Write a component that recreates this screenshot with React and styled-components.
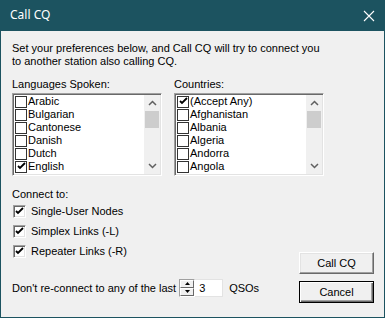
import React from "react";
import styled, { createGlobalStyle } from "styled-components";

const Global = createGlobalStyle`
  html, body { margin: 0; padding: 0; background: #f0f0f0; overflow: hidden; }
  * { box-sizing: border-box; }
`;

const Window = styled.div`
  width: 385px;
  height: 318px;
  background: #1c5360;
  padding: 0 1px 1px 1px;
  display: flex;
  flex-direction: column;
  font-family: "Liberation Sans", Arial, sans-serif;
  font-size: 11px;
  color: #000;
`;

const TitleBar = styled.div`
  height: 31px;
  flex: none;
  display: flex;
  align-items: center;
  justify-content: space-between;
  padding: 0 9px 0 9px;
  color: #fff;
  font-family: "Noto Sans", sans-serif;
  font-size: 12px;
`;

const TitleText = styled.span`
  line-height: 16px;
  margin-top: -1px;
`;

const Client = styled.div`
  flex: 1;
  background: #f0f0f0;
  padding: 11px 10px 0 11px;
  display: flex;
  flex-direction: column;
`;

const Text = styled.div`
  line-height: 13px;
  white-space: nowrap;
`;

const Lists = styled.div`
  display: flex;
  gap: 12px;
  margin-top: 10px;
`;

const ListColumn = styled.div`
  display: flex;
  flex-direction: column;
  width: 150px;
`;

const ListBox = styled.div`
  margin-top: 2px;
  height: 83px;
  border: 1px solid;
  border-color: #a0a0a0 #fff #fff #a0a0a0;
  box-shadow: inset 1px 1px 0 #696969, inset -1px -1px 0 #e3e3e3;
  padding: 1px;
  display: flex;
  background: #fff;
`;

const Items = styled.div`
  flex: 1;
  overflow: hidden;
  background: #fff;
`;

const Item = styled.div`
  height: 13px;
  display: flex;
  align-items: center;
  line-height: 13px;
  white-space: nowrap;
`;

const ListCheck = styled.span`
  width: 12px;
  height: 12px;
  margin: 0 1px 0 1px;
  border: 1px solid #333;
  background: #fff;
  flex: none;
  display: flex;
  align-items: center;
  justify-content: center;
`;

const ScrollBar = styled.div`
  width: 16px;
  flex: none;
  background: #f0f0f0;
  display: flex;
  flex-direction: column;
`;

const ScrollArrow = styled.div`
  height: 16px;
  display: flex;
  align-items: center;
  justify-content: center;
`;

const Thumb = styled.div`
  height: 17px;
  margin: 0 1px;
  background: #cdcdcd;
`;

const ScrollTrack = styled.div`
  flex: 1;
`;

const Bottom = styled.div`
  flex: 1;
  display: flex;
  justify-content: space-between;
  margin-top: 12px;
`;

const LeftCol = styled.div`
  display: flex;
  flex-direction: column;
`;

const CheckRow = styled.label`
  height: 20px;
  display: flex;
  align-items: center;
  gap: 5px;
  margin-left: 1px;
`;

const Box3D = styled.span`
  width: 13px;
  height: 13px;
  flex: none;
  border: 1px solid;
  border-color: #a0a0a0 #fff #fff #a0a0a0;
  box-shadow: inset 1px 1px 0 #696969, inset -1px -1px 0 #e3e3e3;
  background: #fff;
  display: flex;
  align-items: center;
  justify-content: center;
`;

const SpinRow = styled.div`
  display: flex;
  align-items: center;
  margin-top: 17px;
  height: 19px;
`;

const Spinner = styled.div`
  display: flex;
  flex-direction: column;
  width: 16px;
  height: 18px;
  margin-left: 3px;
  border: 1px solid;
  border-color: #a0a0a0 #fff #fff #a0a0a0;
`;

const SpinBtn = styled.div`
  flex: 1;
  background: #f0f0f0;
  border: 1px solid;
  border-color: #fff #696969 #696969 #fff;
  display: flex;
  align-items: center;
  justify-content: center;
`;

const Edit = styled.div`
  width: 28px;
  height: 18px;
  background: #fff;
  border: 1px solid #e3e3e3;
  border-left: none;
  padding-left: 4px;
  line-height: 16px;
`;

const QsoLabel = styled.span`
  margin-left: 6px;
`;

const RightCol = styled.div`
  display: flex;
  flex-direction: column;
  gap: 7px;
  padding-top: 64px;
`;

const Button = styled.button`
  width: 75px;
  height: 22px;
  font-family: "Liberation Sans", Arial, sans-serif;
  font-size: 11px;
  color: #000;
  background: #f0f0f0;
  padding: 0;
  border: 1px solid;
  border-color: ${(p) => (p.$default ? "#000" : "#fff #696969 #696969 #fff")};
  box-shadow: ${(p) =>
    p.$default
      ? "inset 1px 1px 0 #fff, inset -1px -1px 0 #696969, inset -2px -2px 0 #a0a0a0"
      : "inset -1px -1px 0 #a0a0a0, inset 1px 1px 0 #e3e3e3"};
`;

const Check = ({ size = 9 }) => (
  <svg width={size} height={size} viewBox="0 0 9 9">
    <path d="M1 4 L3 6 L8 1" fill="none" stroke="#000" strokeWidth="1.8" />
  </svg>
);

const Chevron = ({ down }) => (
  <svg width="9" height="6" viewBox="0 0 9 6">
    <path
      d={down ? "M1 1 L4.5 4.5 L8 1" : "M1 5 L4.5 1.5 L8 5"}
      fill="none"
      stroke="#606060"
      strokeWidth="1.5"
    />
  </svg>
);

const Tri = ({ down }) => (
  <svg width="5" height="3" viewBox="0 0 5 3">
    <path d={down ? "M0 0 H5 L2.5 3 Z" : "M0 3 H5 L2.5 0 Z"} fill="#000" />
  </svg>
);

const CloseIcon = () => (
  <svg width="12" height="12" viewBox="0 0 12 12">
    <path d="M1 1 L11 11 M11 1 L1 11" stroke="#fff" strokeWidth="1.1" />
  </svg>
);

const languages = [
  ["Arabic", false],
  ["Bulgarian", false],
  ["Cantonese", false],
  ["Danish", false],
  ["Dutch", false],
  ["English", true],
  ["", false],
];

const countries = [
  ["(Accept Any)", true],
  ["Afghanistan", false],
  ["Albania", false],
  ["Algeria", false],
  ["Andorra", false],
  ["Angola", false],
  ["", false],
];

const CheckList = ({ items }) => (
  <ListBox>
    <Items>
      {items.map(([name, on], i) => (
        <Item key={i}>
          <ListCheck>{on && <Check />}</ListCheck>
          {name}
        </Item>
      ))}
    </Items>
    <ScrollBar>
      <ScrollArrow>
        <Chevron />
      </ScrollArrow>
      <Thumb />
      <ScrollTrack />
      <ScrollArrow>
        <Chevron down />
      </ScrollArrow>
    </ScrollBar>
  </ListBox>
);

export default function App() {
  return (
    <>
      <Global />
      <Window>
        <TitleBar>
          <TitleText>Call CQ</TitleText>
          <CloseIcon />
        </TitleBar>
        <Client>
          <Text>
            Set your preferences below, and Call CQ will try to connect you
            <br />
            to another station also calling CQ.
          </Text>
          <Lists>
            <ListColumn>
              <Text>Languages Spoken:</Text>
              <CheckList items={languages} />
            </ListColumn>
            <ListColumn>
              <Text>Countries:</Text>
              <CheckList items={countries} />
            </ListColumn>
          </Lists>
          <Bottom>
            <LeftCol>
              <Text>Connect to:</Text>
              <CheckRow>
                <Box3D>
                  <Check />
                </Box3D>
                Single-User Nodes
              </CheckRow>
              <CheckRow>
                <Box3D>
                  <Check />
                </Box3D>
                Simplex Links (-L)
              </CheckRow>
              <CheckRow>
                <Box3D>
                  <Check />
                </Box3D>
                Repeater Links (-R)
              </CheckRow>
              <SpinRow>
                <span>Don't re-connect to any of the last</span>
                <Spinner>
                  <SpinBtn>
                    <Tri />
                  </SpinBtn>
                  <SpinBtn>
                    <Tri down />
                  </SpinBtn>
                </Spinner>
                <Edit>3</Edit>
                <QsoLabel>QSOs</QsoLabel>
              </SpinRow>
            </LeftCol>
            <RightCol>
              <Button>Call CQ</Button>
              <Button $default>Cancel</Button>
            </RightCol>
          </Bottom>
        </Client>
      </Window>
    </>
  );
}
